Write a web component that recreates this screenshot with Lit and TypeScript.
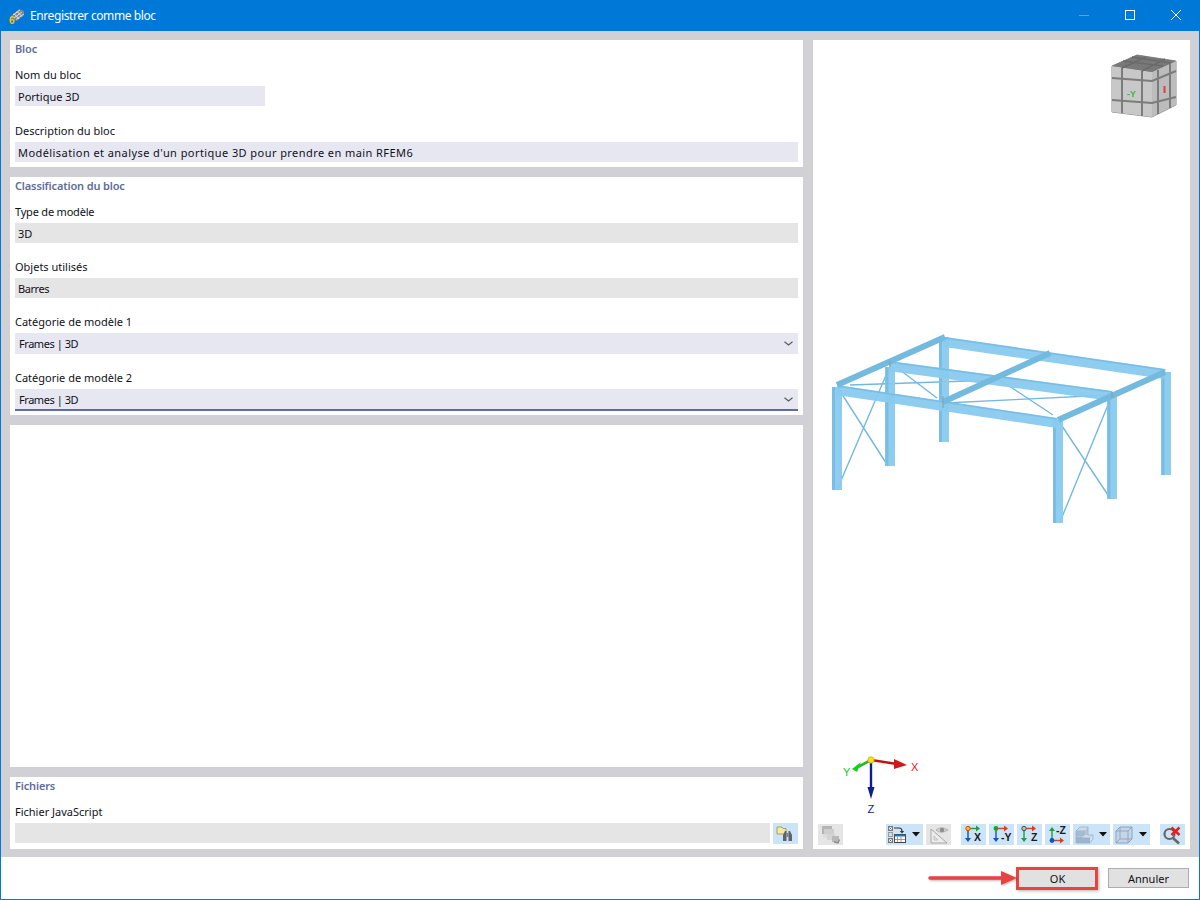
import { LitElement, html, css, svg } from 'lit';
import { customElement } from 'lit/decorators.js';

const CHEVRON = html`<svg class="chevron" width="9" height="5" viewBox="0 0 9 5"><path d="M0.500 0.800 L4.500 4 L8.500 0.800" fill="none" stroke="#5a5a5a" stroke-width="1.200"/></svg>`;

// axis arrows shared by the view buttons
const arrowRight = (x1: number, x2: number, y: number, c: string) => svg`
  <path d="M${x1} ${y} H${x2 - 3}" stroke=${c} stroke-width="1.4"/>
  <path d="M${x2 - 4} ${y - 3} L${x2} ${y} L${x2 - 4} ${y + 3} Z" fill=${c}/>`;
const arrowDown = (x: number, y1: number, y2: number, c: string) => svg`
  <path d="M${x} ${y1} V${y2 - 3}" stroke=${c} stroke-width="1.4"/>
  <path d="M${x - 3} ${y2 - 4} L${x} ${y2} L${x + 3} ${y2 - 4} Z" fill=${c}/>`;
const arrowUp = (x: number, y1: number, y2: number, c: string) => svg`
  <path d="M${x} ${y1} V${y2 + 3}" stroke=${c} stroke-width="1.4"/>
  <path d="M${x - 3} ${y2 + 4} L${x} ${y2} L${x + 3} ${y2 + 4} Z" fill=${c}/>`;
const axisLabel = (x: number, y: number, t: string) =>
  svg`<text x=${x} y=${y} font-family="Liberation Sans, sans-serif" font-size="10.5" font-weight="700" fill="#1a1a1a">${t}</text>`;

const ICON_X = svg`${arrowRight(7, 19, 4.5, '#1f9e3a')}${arrowDown(7, 6, 18, '#1450c8')}
  <circle cx="7" cy="4.5" r="2.2" fill="#f2c21a" stroke="#d8402a"/>${axisLabel(13, 17, 'X')}`;
const ICON_Y = svg`${arrowRight(7, 19, 4.5, '#d8401a')}${arrowDown(7, 6, 18, '#1450c8')}
  <circle cx="7" cy="4.5" r="2.4" fill="#1f9e3a"/>${axisLabel(12, 17, '-Y')}`;
const ICON_Z = svg`${arrowRight(7, 19, 4.5, '#d8401a')}${arrowDown(7, 6, 18, '#1f9e3a')}
  <circle cx="7" cy="4.5" r="2.2" fill="#f2c21a" stroke="#1450c8"/>${axisLabel(14, 17, 'Z')}`;
const ICON_MZ = svg`${arrowUp(7, 15, 3, '#1f9e3a')}${arrowRight(7, 19, 16.5, '#d8401a')}
  <circle cx="7" cy="16.5" r="2.4" fill="#1450c8"/>${axisLabel(11, 10, '-Z')}`;

const ICON_DISABLED = svg`
  <rect x="4" y="2" width="10" height="8" fill="#b4b4b4"/>
  <rect x="6" y="5" width="10" height="7" fill="#cdcdcd"/>
  <rect x="5" y="10" width="9" height="4" fill="#dcdcdc"/>
  <rect x="9" y="10" width="8" height="6" fill="#d4d4d4"/>
  <rect x="14" y="12" width="7" height="6" fill="#b8b8b8"/>
  <path d="M16 18 l4 1 l1.500 -3.500" fill="none" stroke="#8a8a8a" stroke-width="1.300"/>`;
const ICON_TABLE = svg`
  <rect x="2.500" y="2.500" width="4" height="4" fill="#eee" stroke="#777"/>
  <rect x="2.500" y="8.500" width="4" height="4" fill="#ddd" stroke="#999"/>
  <rect x="2.500" y="14.500" width="4" height="4" fill="#eee" stroke="#777"/>
  <path d="M3.500 3.500 l2 2 M5.500 3.500 l-2 2 M3.500 15.500 l2 2 M5.500 15.500 l-2 2" stroke="#555" stroke-width=".7"/>
  <path d="M8 4 h5 q3 0 3 3 v1" fill="none" stroke="#333" stroke-width="1.100"/>
  <path d="M13.800 7 h4.400 l-2.200 2.600 Z" fill="#333"/>
  <rect x="8.500" y="10.500" width="11" height="8" fill="#fff" stroke="#444"/>
  <rect x="8.500" y="10.500" width="11" height="2" fill="#2f6fb0"/>
  <path d="M11.500 13 v5 M15 13 v5 M9 15.500 h10" stroke="#777" stroke-width=".7"/>`;
const ICON_RULER = svg`
  <path d="M5 5 V19 H21 Z" fill="#ececec" stroke="#a8a8a8"/>
  <path d="M8 12 V16 H12 Z" fill="#e2e2e2" stroke="#b5b5b5" stroke-width=".7"/>
  <path d="M10 6 q5 -4.500 12 0 q-7 4.500 -12 0 Z" fill="#d4d4d4" stroke="#a0a0a0" stroke-width=".7"/>
  <circle cx="16" cy="6" r="2.200" fill="#8d8d8d"/>`;
const ICON_STAIRS = svg`
  <path d="M3 7 L7 3 H15 V11 H20 L17 14 V19 H3 Z" fill="#b4c8da"/>
  <path d="M7 3 H15 L12 6.500 H3.500 Z" fill="#cfdce8"/>
  <path d="M12 6.500 H3 V12 H12 Z" fill="#a4bbd0"/>
  <path d="M3 13 H17 V19 H3 Z" fill="#9cb5cc"/>
  <path d="M12 11 H20 L17 13.500 H9 Z" fill="#cfdce8"/>
  <path d="M3 7 L7 3 H15 V11 H20 V15 L17 19 H3 Z" fill="none" stroke="#9ab0c5" stroke-width=".8"/>`;
const ICON_CUBE = svg`
  <path d="M3 7 L7 3 H19 V15 L15 19 H3 Z" fill="#c3d5e6" stroke="#8ea4ba"/>
  <path d="M3 7 H15 V19 M15 7 L19 3 M3 19 L7 15 V3 M7 15 H19" fill="none" stroke="#8ea4ba" stroke-width=".9"/>`;
const ICON_SEARCH_X = svg`
  <circle cx="9.500" cy="10" r="5" fill="none" stroke="#666" stroke-width="2.200"/>
  <path d="M13 14 L19 19.500" stroke="#666" stroke-width="2.600"/>
  <path d="M11.500 3.500 L19.500 11 M19.500 3.500 L11.500 11" stroke="#e0201c" stroke-width="2.400"/>`;
const ICON_FILE = svg`
  <path d="M4 4 H9 L10 5.500 H13 V11 H4 Z" fill="#f5e9a8" stroke="#a8994f" stroke-width=".9"/>
  <path d="M11.500 9 Q11.500 8 12.500 8 H13.500 V18 H10 V12 Z" fill="#5d646e"/>
  <path d="M15.500 8 H16.500 Q17.500 8 17.500 9 L19 12 V18 H15.500 Z" fill="#5d646e"/>
  <rect x="13.500" y="10" width="2" height="4" fill="#7a818a"/>`;

const STRUCTURE = svg`
  <g stroke-linecap="butt" fill="none">
    <!-- bracing -->
    <g stroke="#74b8dd" stroke-width="1.400">
      <path d="M25 58 L75 136 M24 160 L74 43"/>
      <path d="M245 90 L297 168 M247 192 L297 70"/>
      <path d="M37 55 L184 50 M132 73 L297 65"/>
      <path d="M87 40 L124 68 M187 50 L240 85"/>
    </g>
    <!-- columns -->
    <g stroke="#88cbef" stroke-width="10" opacity=".95">
      <path d="M24 57 V160"/>
      <path d="M77 37 V136"/>
      <path d="M131 7 V112"/>
      <path d="M245 90 V193"/>
      <path d="M299 63 V169"/>
      <path d="M353 42 V145"/>
    </g>
    <g stroke="#6fb6de" stroke-width="3" opacity=".65">
      <path d="M20.500 57 V160 M74 37 V136 M127.500 7 V112 M241.500 90 V193 M296 63 V169 M350 42 V145"/>
    </g>
    <!-- long beams -->
    <g stroke="#88cbef" stroke-width="10" opacity=".95">
      <path d="M24 60 L244 93"/>
      <path d="M76 36 L299 66"/>
      <path d="M132 12 L352 44"/>
    </g>
    <g stroke="#70b7df" stroke-width="1.600" opacity=".7">
      <path d="M24 56 L244 89 M76 32 L299 62 M132 8 L352 40"/>
    </g>
    <!-- cross beams -->
    <g stroke="#74badf" stroke-width="6">
      <path d="M24 55 L132 7"/>
      <path d="M245 90 L352 42"/>
      <path d="M130 72 L237 23"/>
    </g>
    <g stroke="#8a9aa6" stroke-width="1">
      <path d="M130 66 V78 M77 31 V37 M299 62 V68"/>
    </g>
  </g>`;

const CUBE = svg`
  <path d="M1 15 L26 4 L65 10 L65 54 L41 66 L1 61 Z" fill="#8c8c8c" stroke="#8c8c8c" stroke-linejoin="round"/>
  <path d="M1 15 L41 21 L41 66 L1 61 Z" fill="#c8c8c8"/>
  <path d="M41 21 L65 10 L65 54 L41 66 Z" fill="#bcbcbc"/>
  <path d="M1 15 L26 4 L65 10 L41 21 Z" fill="#797979"/>
  <g stroke="#7c7c7c" stroke-width="2" fill="none">
    <path d="M1 27 L41 30 L65 20"/>
    <path d="M1 49 L41 52 L65 46"/>
    <path d="M11 17 V62"/>
    <path d="M31 20 V65"/>
    <path d="M47 19 V63"/>
    <path d="M59 13 V57"/>
  </g>
  <g stroke="#6a6a6a" stroke-width="1.500" fill="none">
    <path d="M11 17 L35 6 M31 20 L54 8 M12 10 L52 15 M21 6 L60 12"/>
  </g>
  <text x="16" y="46" font-family="Liberation Sans, sans-serif" font-size="9" font-weight="700" fill="#3cb54a">-Y</text>
  <rect x="52.500" y="35" width="2" height="7" fill="#d9433f"/>`;

const TRIAD = svg`
  <path d="M40 14 L66 18" stroke="#c21414" stroke-width="2.400"/>
  <path d="M63 13 L76 19 L63 23 Z" fill="#d01818"/>
  <path d="M40 14 L27 21" stroke="#2bb52b" stroke-width="2.600"/>
  <path d="M30 16 L21 23 L26 26 Z" fill="#18d018"/>
  <path d="M40 14 V42" stroke="#0d1f8f" stroke-width="2.400"/>
  <path d="M36.500 41 L40 53 L43.500 41 Z" fill="#0d1f8f"/>
  <circle cx="40" cy="14" r="3.200" fill="#f1e21c" stroke="#b5a314" stroke-width=".6"/>
  <text x="80" y="25" font-family="Liberation Sans, sans-serif" font-size="11" fill="#f01010">X</text>
  <text x="12" y="30" font-family="Liberation Sans, sans-serif" font-size="11" fill="#14c814">Y</text>
  <text x="36.500" y="67" font-family="Liberation Sans, sans-serif" font-size="11" fill="#0d1f8f">Z</text>`;

@customElement('app-root')
export class AppRoot extends LitElement {
  static styles = css`
    :host {
      display: flex;
      flex-direction: column;
      width: 1200px;
      height: 900px;
      box-sizing: border-box;
      border: 1px solid #0078d7;
      border-top: none;
      background: #fff;
      font-family: 'Noto Sans', sans-serif;
      font-size: 11px;
      color: #101018;
      overflow: hidden;
      position: relative;
    }
    .titlebar {
      flex: 0 0 31px;
      margin: 0 -1px;
      background: #0078d7;
      color: #fff;
      display: flex;
      align-items: center;
      font-size: 12px;
      letter-spacing: -0.4px;
      padding: 0 1px 0 9px;
    }
    .titlebar .title { margin-left: 5px; }
    .controls { margin-left: auto; display: flex; }
    .controls svg { display: block; }
    .body {
      flex: 0 0 826px;
      box-sizing: border-box;
      background: #d1d0d4;
      padding: 9px 9px 8px;
      display: flex;
      gap: 10px;
    }
    .left { flex: 0 0 793px; display: flex; flex-direction: column; gap: 10px; }
    .panel { background: #fff; padding: 0 5px 5px; }
    .panel.tight { padding-bottom: 4px; }
    .panel.blank { flex: 1; padding: 0; }
    h2 {
      margin: 0;
      height: 18px;
      line-height: 18px;
      font-size: 11px;
      font-weight: 600;
      letter-spacing: -0.15px;
      color: #5f6d98;
    }
    .group { margin-top: 15px; }
    h2 + .group { margin-top: 7px; }
    .group.near { margin-top: 14px; }
    label { display: block; height: 21px; line-height: 19px; }
    label.narrow { letter-spacing: -0.2px; }
    .field {
      box-sizing: border-box;
      height: 20px;
      line-height: 22px;
      padding-left: 3px;
      background: #e7e7f1;
      white-space: nowrap;
    }
    .field.short { width: 250px; }
    .field.readonly { background: #e5e5e5; }
    .spread { letter-spacing: 0.43px; }
    .narrow-value { letter-spacing: -0.45px; }
    .field.select {
      height: 21px;
      line-height: 21px;
      display: flex;
      align-items: center;
      justify-content: space-between;
      padding: 0 5px 0 4px;
    }
    .field.select.focus { height: 22px; border-bottom: 2px solid #6368ae; }
    .file-row { display: flex; align-items: flex-start; gap: 3px; }
    .file-row .field { flex: 1; }
    .tool {
      flex: none;
      display: flex;
      align-items: center;
      box-sizing: border-box;
      width: 25px;
      height: 21px;
      background: #cce4f7;
    }
    .tool.wide { width: 37px; }
    .tool.off { background: #e5e5e5; }
    .tool svg.drop { margin-left: 1px; }
    .right {
      flex: 1;
      background: #fff;
      display: flex;
      flex-direction: column;
      position: relative;
    }
    .canvas { flex: 1; position: relative; }
    .canvas svg { position: absolute; overflow: visible; }
    .cube { left: 298px; top: 11px; filter: blur(0.4px); }
    .structure { left: 0; top: 290px; filter: blur(0.35px); }
    .triad { left: 18px; top: 706px; }
    .toolbar { display: flex; gap: 3px; padding: 0 5px 4px; }
    .toolbar .g1 { margin-left: 40px; }
    .toolbar .g2 { margin-left: 7px; }
    .footer {
      flex: 1;
      display: flex;
      justify-content: flex-end;
      gap: 10px;
      padding: 11px 10px 0 0;
    }
    button {
      box-sizing: border-box;
      width: 81px;
      height: 20px;
      margin: 0;
      padding: 0;
      border: 1px solid #adadad;
      background: #e1e1e1;
      font: inherit;
      font-size: 11px;
      color: #101018;
    }
    .highlight {
      position: absolute;
      left: 1015px;
      top: 867px;
      width: 82px;
      height: 23px;
      box-sizing: border-box;
      border: 3px solid #e84343;
      box-shadow: 1px 1px 3px rgba(0, 0, 0, 0.3);
    }
    .callout {
      position: absolute;
      left: 927px;
      top: 870px;
      filter: drop-shadow(1px 1px 1px rgba(0, 0, 0, 0.3));
    }
  `;

  private tool(icon: unknown, wide = false, off = false, cls = '') {
    return html`<div class="tool ${wide ? 'wide' : ''} ${off ? 'off' : ''} ${cls}">
      <svg width="25" height="21" viewBox="0 0 25 21">${icon}</svg>
      ${wide
        ? html`<svg class="drop" width="9" height="5" viewBox="0 0 9 5"><path d="M0 0 H8 L4 4.500 Z" fill="#111"/></svg>`
        : ''}
    </div>`;
  }

  render() {
    return html`
      <div class="titlebar">
        <svg width="16" height="16" viewBox="0 0 16 16">
          <path d="M2 8 L10 1 L15 3 L15 7 L8 13 L3 12 Z" fill="#7f8389"/>
          <path d="M4 7 L11 2 M5 10 L13 4 M7 11.500 L15 6 M8 3.500 L13 8.500 M5 5.500 L10 11" stroke="#e8eaee" stroke-width=".9"/>
          <text x="0" y="15.500" font-family="Liberation Sans, sans-serif" font-size="10" font-weight="700" fill="#f3c316">6</text>
        </svg>
        <span class="title">Enregistrer comme bloc</span>
        <div class="controls">
          <svg width="46" height="31" viewBox="0 0 46 31"><path d="M18 15.500 H28" stroke="#5aa7e6"/></svg>
          <svg width="46" height="31" viewBox="0 0 46 31"><rect x="18.500" y="10.500" width="9" height="9" fill="none" stroke="#fff"/></svg>
          <svg width="46" height="31" viewBox="0 0 46 31"><path d="M18 10 L28 20 M28 10 L18 20" stroke="#fff"/></svg>
        </div>
      </div>
      <div class="body">
        <div class="left">
          <section class="panel">
            <h2>Bloc</h2>
            <div class="group">
              <label>Nom du bloc</label>
              <div class="field short">Portique 3D</div>
            </div>
            <div class="group">
              <label>Description du bloc</label>
              <div class="field spread">Modélisation et analyse d'un portique 3D pour prendre en main RFEM6</div>
            </div>
          </section>
          <section class="panel tight">
            <h2>Classification du bloc</h2>
            <div class="group">
              <label class="narrow">Type de modèle</label>
              <div class="field readonly">3D</div>
            </div>
            <div class="group near">
              <label>Objets utilisés</label>
              <div class="field readonly narrow-value">Barres</div>
            </div>
            <div class="group near">
              <label>Catégorie de modèle 1</label>
              <div class="field select"><span class="narrow-value">Frames | 3D</span>${CHEVRON}</div>
            </div>
            <div class="group near">
              <label>Catégorie de modèle 2</label>
              <div class="field select focus"><span class="narrow-value">Frames | 3D</span>${CHEVRON}</div>
            </div>
          </section>
          <section class="panel blank"></section>
          <section class="panel">
            <h2>Fichiers</h2>
            <div class="group">
              <label>Fichier JavaScript</label>
              <div class="file-row">
                <div class="field readonly"></div>
                ${this.tool(ICON_FILE)}
              </div>
            </div>
          </section>
        </div>
        <div class="right">
          <div class="canvas">
            <svg class="cube" width="68" height="70" viewBox="0 0 68 70">${CUBE}</svg>
            <svg class="structure" width="360" height="200" viewBox="0 0 360 200">${STRUCTURE}</svg>
            <svg class="triad" width="100" height="72" viewBox="0 0 100 72">${TRIAD}</svg>
          </div>
          <div class="toolbar">
            ${this.tool(ICON_DISABLED, false, true)}
            ${this.tool(ICON_TABLE, true, false, 'g1')}
            ${this.tool(ICON_RULER, false, true)}
            ${this.tool(ICON_X, false, false, 'g2')}
            ${this.tool(ICON_Y)}
            ${this.tool(ICON_Z)}
            ${this.tool(ICON_MZ)}
            ${this.tool(ICON_STAIRS, true)}
            ${this.tool(ICON_CUBE, true)}
            ${this.tool(ICON_SEARCH_X, false, false, 'g2')}
          </div>
        </div>
      </div>
      <div class="footer">
        <button>OK</button>
        <button>Annuler</button>
      </div>
      <div class="highlight"></div>
      <svg class="callout" width="92" height="16" viewBox="0 0 92 16">
        <path d="M2 8 H74" stroke="#e84343" stroke-width="3.500" stroke-linecap="round"/>
        <path d="M73 1 L89 8 L73 15 Z" fill="#e84343"/>
      </svg>
    `;
  }
}
